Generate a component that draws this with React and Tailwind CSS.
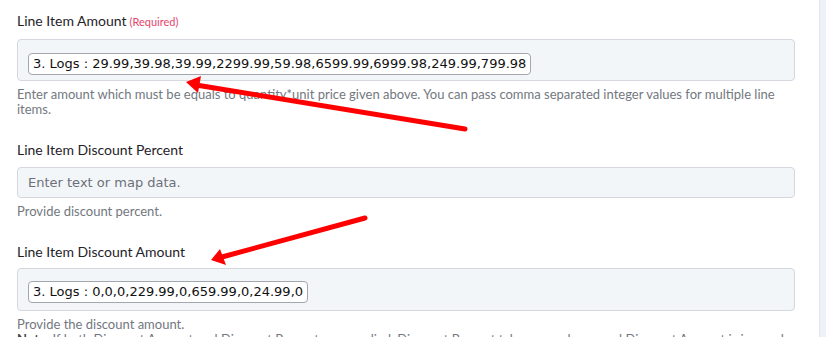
import React from "react";

const Field = ({ label, required, children, help, className = "" }) => (
  <div className={className}>
    <div className="text-[14px] leading-[20px] text-[#1f2328] font-['Lato',sans-serif]">
      {label}
      {required && (
        <span className="ml-[3px] text-[11px] text-[#e5466b]">(Required)</span>
      )}
    </div>
    {children}
    <div className="mt-[6px] text-[13px] leading-[15px] text-[#737880] font-['Lato',sans-serif]">
      {help}
    </div>
  </div>
);

const Chip = ({ text }) => (
  <span className="inline-flex h-[22px] items-center rounded-[4px] border border-[#a3a7ad] bg-white px-[4px] text-[13px] text-[#111] font-['DejaVu_Sans',sans-serif] whitespace-nowrap">
    {text}
  </span>
);

const Arrows = () => (
  <svg
    className="pointer-events-none absolute inset-0"
    width="826"
    height="337"
    viewBox="0 0 826 337"
  >
    <g stroke="#ff0000" strokeWidth="5" strokeLinecap="round" fill="#ff0000">
      <line x1="465" y1="129" x2="196" y2="85" />
      <line x1="365" y1="218" x2="222" y2="257" />
    </g>
    <polygon points="186,82 201,76 198,93" fill="#ff0000" />
    <polygon points="211,260 220,249 226,265" fill="#ff0000" />
  </svg>
);

export default function App() {
  return (
    <div className="relative flex h-[337px] w-[826px] overflow-hidden bg-white">
      <div className="flex-1 pl-[17px] pr-[24px] pt-[11px]">
        <Field
          label="Line Item Amount"
          required
          help={
            <>
              Enter amount which must be equals to quantity*unit price given
              above. You can pass comma separated integer values for multiple
              line items.
            </>
          }
        >
          <div className="mt-[7px] h-[42px] rounded-[4px] border border-[#d4d8de] bg-[#f3f6f9] pl-[10px] pt-[10px]">
            <Chip text="3. Logs : 29.99,39.98,39.99,2299.99,59.98,6599.99,6999.98,249.99,799.98" />
          </div>
        </Field>

        <Field
          className="mt-[23px]"
          label="Line Item Discount Percent"
          help="Provide discount percent."
        >
          <div className="mt-[7px] flex h-[31px] items-center rounded-[4px] border border-[#d4d8de] bg-[#f3f6f9] pl-[10px] text-[13px] text-[#6b7078] font-['DejaVu_Sans',sans-serif]">
            Enter text or map data.
          </div>
        </Field>

        <Field
          className="mt-[23px]"
          label="Line Item Discount Amount"
          help={
            <>
              Provide the discount amount.
              <br />
              <b className="text-[#444]">Note:</b> If both Discount Amount and
              Discount Percent are supplied, Discount Percent takes precedence
              and Discount Amount is ignored.
            </>
          }
        >
          <div className="mt-[6px] h-[43px] rounded-[4px] border border-[#d4d8de] bg-[#f3f6f9] pl-[10px] pt-[9px]">
            <Chip text="3. Logs : 0,0,0,229.99,0,659.99,0,24.99,0" />
          </div>
        </Field>
      </div>
      <div className="w-[7px] border-l border-[#dfe5ef] bg-[#eef2f8]" />
      <Arrows />
    </div>
  );
}
